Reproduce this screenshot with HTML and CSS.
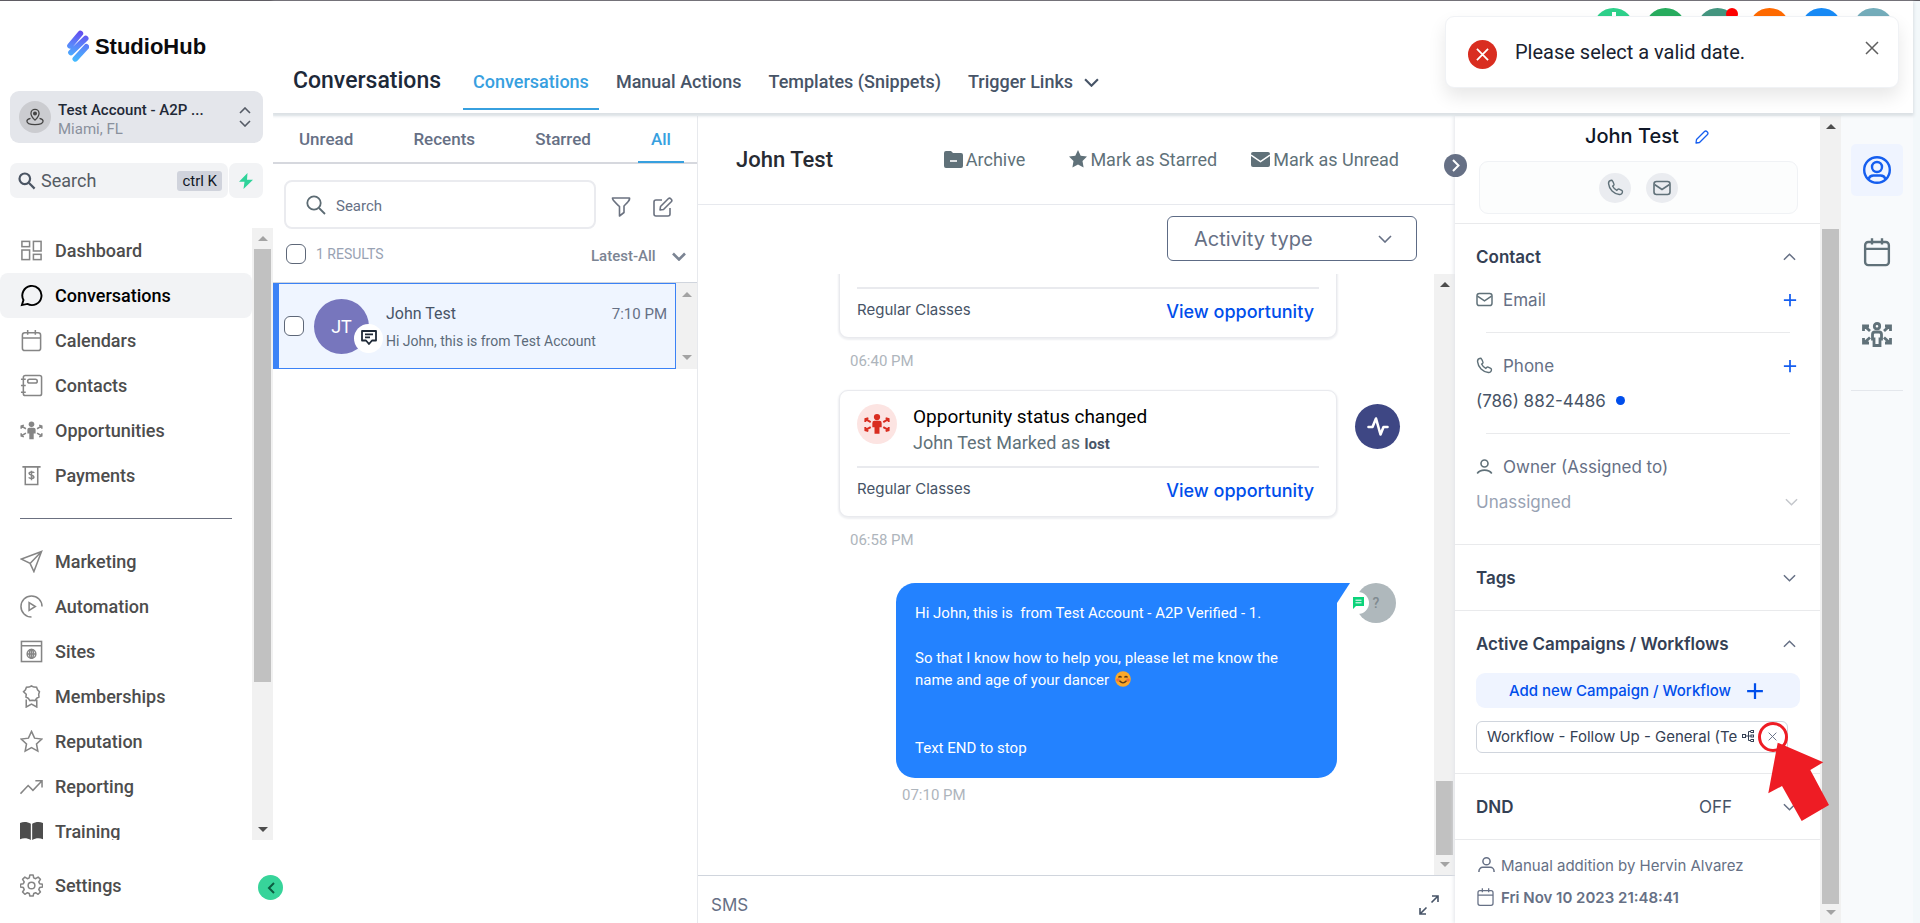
FILE: index.html
```html
<!DOCTYPE html>
<html lang="en">
<head>
<meta charset="utf-8">
<meta name="viewport" content="width=device-width, initial-scale=1">
<title>StudioHub – Conversations</title>
<link rel="stylesheet" href="styles.css">
</head>
<body>
<svg class="defs" aria-hidden="true">
  <defs>
    <linearGradient id="brand" gradientUnits="userSpaceOnUse" x1="245" y1="90" x2="225" y2="185">
      <stop offset="0" stop-color="#6446ee"/><stop offset=".5" stop-color="#5a86fa"/><stop offset="1" stop-color="#41bdff"/>
    </linearGradient>
    <symbol id="i-down" viewBox="0 0 14 8"><path d="M1 1l6 6 6-6"/></symbol>
    <symbol id="i-up" viewBox="0 0 14 8"><path d="M1 7l6-6 6 6"/></symbol>
    <symbol id="i-plus" viewBox="0 0 16 16"><path d="M8 1v14M1 8h14"/></symbol>
    <symbol id="i-x" viewBox="0 0 14 14"><path d="M1 1l12 12M13 1L1 13"/></symbol>
    <symbol id="i-cal" viewBox="0 0 24 24"><rect x="2.5" y="4" width="19" height="18.5" rx="2.5"/><path d="M2.500 9.500h19M8 1v5M16 1v5"/></symbol>
    <symbol id="i-mail" viewBox="0 0 18 16"><rect x="1" y="1.500" width="16" height="13" rx="2.500"/><path d="M1.500 4.500L9 9.500l7.500-5"/></symbol>
    <symbol id="i-phone" viewBox="0 0 24 24"><path d="M6.200 1.800C4 2 2 4 2.200 6.500 3 14.500 9.500 21 17.500 21.800c2.500.2 4.500-1.800 4.300-4 0-.8-.4-1.400-1-1.700l-3.600-1.800c-.8-.4-1.600-.2-2.200.4l-1.200 1.300c-2.600-1.300-4.500-3.200-5.800-5.800L9.300 9c.6-.6.8-1.400.4-2.200L7.900 2.900c-.3-.7-1-1.100-1.700-1.100z"/></symbol>
    <symbol id="i-user" viewBox="0 0 18 18"><circle cx="9" cy="5" r="3.800"/><path d="M1 16.500v-1a4 4 0 0 1 4-4h8a4 4 0 0 1 4 4v1"/></symbol>
    <symbol id="i-people" viewBox="0 0 24 20"><g fill="currentColor" stroke="none"><circle cx="12" cy="3.600" r="2.900"/><path d="M9.700 7h4.600a2 2 0 0 1 2 2v4h-2v6h-4.600v-6h-2V9a2 2 0 0 1 2-2z"/></g><path d="M6.200 8.200L1.500 5.500M1.200 8.200L1.300 5.300 4 4.600M6.200 12.800L1.500 15.500M1.200 12.800l.1 2.900 2.700.7M17.800 8.200l4.700-2.700M22.800 8.200l-.1-2.900L20 4.600M17.800 12.800l4.700 2.700M22.800 12.800l-.1 2.900-2.700.7"/></symbol>
  </defs>
</svg>

<div class="app">
  <aside class="sidebar">
    <div class="logo">
      <svg width="22" height="32" viewBox="202 90 66 95"><g stroke="url(#brand)" stroke-width="17" stroke-linecap="round"><path d="M211 137l31-37M214 157l44-42M227 176l33-36"/></g></svg>
      <span>StudioHub</span>
    </div>
    <button class="account">
      <span class="account-pin"><svg width="18" height="18" viewBox="0 0 20 20" stroke-width="1.400"><circle cx="10" cy="6" r="1.500" fill="currentColor"/><path d="M10 13.500C7 10.500 5.500 8.500 5.500 6a4.500 4.500 0 0 1 9 0c0 2.500-1.500 4.500-4.500 7.500z"/><path d="M5 11.500c-2.500.6-4 1.600-4 3C1 17 5 18.500 10 18.500s9-1.500 9-4c0-1.400-1.500-2.400-4-3"/></svg></span>
      <span class="account-text"><span class="account-name">Test Account - A2P ...</span><span class="account-city">Miami, FL</span></span>
      <svg class="updown" width="12" height="20" viewBox="0 0 12 20"><path d="M1 6l5-5 5 5M1 14l5 5 5-5"/></svg>
    </button>
    <div class="quick">
      <label class="quick-search">
        <svg width="18" height="18" viewBox="0 0 18 18" stroke-width="2.200"><circle cx="6.800" cy="6.800" r="5.300"/><path d="M10.800 10.800l5.800 5.800"/></svg>
        <input type="text" placeholder="Search" aria-label="Search">
        <kbd>ctrl K</kbd>
      </label>
      <button class="quick-bolt" aria-label="Quick actions"><svg width="14" height="16" viewBox="0 0 14 16"><path d="M8.500 0L0 8.700h5.500L4.500 16 14 6.800H8z" fill="#2fd39a" stroke="none"/></svg></button>
    </div>

    <div class="nav-wrap">
      <nav class="nav">
        <a href="#"><svg viewBox="0 0 24 24"><rect x="2" y="2.500" width="8" height="5.500"/><rect x="14" y="2.500" width="8" height="10"/><rect x="2" y="11.500" width="8" height="10"/><rect x="14" y="16" width="8" height="5.500"/></svg>Dashboard</a>
        <a href="#" class="active"><svg viewBox="0 0 24 24" stroke-width="2"><path d="M2 22l1.600-5.300A10 10 0 1 1 7.700 20.800z"/></svg>Conversations</a>
        <a href="#"><svg><use href="#i-cal"/></svg>Calendars</a>
        <a href="#"><svg viewBox="0 0 24 24"><rect x="3.500" y="1.500" width="19" height="21" rx="2"/><rect x="8" y="5.500" width="10" height="4" rx="2"/><path d="M1 5.500h5M1 12h5M1 19h5"/></svg>Contacts</a>
        <a href="#"><svg viewBox="0 0 24 20"><use href="#i-people"/></svg>Opportunities</a>
        <a href="#"><svg viewBox="0 0 24 24"><path d="M2.500 3h19M5.500 3v18.500h13V3"/><path d="M14.500 9.500c0-1.500-5-1.500-5 .5s5 1.500 5 3.500-5 2-5 .3M12 7v10"/></svg>Payments</a>
        <hr>
        <a href="#"><svg viewBox="0 0 24 24"><path d="M22.500 1.500L1.500 9.500l9 4.500 4 8.500zM22.500 1.500L10.500 14"/></svg>Marketing</a>
        <a href="#"><svg viewBox="0 0 24 24"><path d="M23 12A11 11 0 1 0 12 23M9.500 8v8l6.500-4z"/></svg>Automation</a>
        <a href="#"><svg viewBox="0 0 24 24"><rect x="1.500" y="1.500" width="21" height="21"/><path d="M1.500 6h21M7.500 14.500h9M12 10v9"/><circle cx="12" cy="14.500" r="4.500"/><ellipse cx="12" cy="14.500" rx="2" ry="4.500"/></svg>Sites</a>
        <a href="#"><svg viewBox="0 0 24 24"><path d="M12 1l2.500 1.200 2.800.2 1 2.600 2 2-.8 2.700.3 2.800-2.500 1.500-1.600 2.300-2.700-.3-2.700.3-1.600-2.300-2.500-1.500.3-2.800L3.700 7l2-2 1-2.600 2.800-.2z"/><path d="M6.500 15v8l5.500-3 5.500 3v-8"/></svg>Memberships</a>
        <a href="#"><svg viewBox="0 0 24 24"><path d="M12 1.500l3.200 7 7.500.9-5.500 5.200 1.400 7.400-6.600-3.600L5.400 22l1.400-7.400L1.300 9.400l7.500-.9z"/></svg>Reputation</a>
        <a href="#"><svg viewBox="0 0 24 24"><path d="M.5 19.500L8.500 11l5 5L23 6M16 6h7v7"/></svg>Reporting</a>
        <a href="#"><svg viewBox="0 0 24 24" class="solid"><path d="M0 3c4-1.500 8-1 11.300.8v17C8 19 4 18.500 0 20zM24 3c-4-1.500-8-1-11.300.8v17C16 19 20 18.500 24 20z"/></svg>Training</a>
      </nav>
      <div class="bar nav-bar"><i class="up dim"></i><b></b><i class="dn"></i></div>
    </div>
    <div class="settings nav">
      <a href="#"><svg viewBox="0 0 24 24"><circle cx="12" cy="12" r="3.500"/><path d="M10.300 1h3.400l.6 3 2 .9 2.600-1.700 2.400 2.400-1.700 2.600.9 2 3 .6v2.800l-3 .6-.9 2 1.700 2.600-2.400 2.400-2.600-1.700-2 .9-.6 2.600h-3.400l-.6-2.600-2-.9-2.600 1.700-2.400-2.400 1.700-2.600-.9-2-3-.6v-2.800l3-.6.9-2-1.700-2.600 2.400-2.400 2.600 1.700 2-.9z" stroke-linejoin="round"/></svg>Settings</a>
      <button class="collapse" aria-label="Collapse sidebar"><svg width="8" height="12" viewBox="0 0 8 12" stroke-width="2"><path d="M7 1L2 6l5 5"/></svg></button>
    </div>
  </aside>

  <div class="main">
    <header class="top">
      <h1>Conversations</h1>
      <nav class="tabs">
        <a href="#" class="on">Conversations</a>
        <a href="#">Manual Actions</a>
        <a href="#">Templates (Snippets)</a>
        <a href="#">Trigger Links <svg width="15" height="9" stroke-width="2"><use href="#i-down"/></svg></a>
      </nav>
      <div class="dots">
        <span class="d1"><svg width="4" height="12" viewBox="0 0 4 12"><path d="M2 0v12" stroke="#fff" stroke-width="4"/></svg></span><span class="d2"></span><span class="d3"><em></em></span><span class="d4"></span><span class="d5"></span><span class="d6"></span>
      </div>
    </header>

    <div class="body">
      <section class="list">
        <nav class="list-tabs"><a href="#">Unread</a><a href="#">Recents</a><a href="#">Starred</a><a href="#" class="on">All</a></nav>
        <div class="list-search">
          <label><svg width="20" height="20" viewBox="0 0 20 20" stroke-width="1.800"><circle cx="8" cy="8" r="6.700"/><path d="M13 13l6 6"/></svg><input type="text" placeholder="Search" aria-label="Search conversations"></label>
          <button aria-label="Filter"><svg width="20" height="20" viewBox="0 0 20 20" stroke-linejoin="round"><path d="M1.500 1h17c.5 2-1 3.600-5.500 8v6.500L8.500 19V9.500C4 5 1 3 1.500 1z"/></svg></button>
          <button aria-label="New conversation"><svg width="20" height="20" viewBox="0 0 20 20" stroke-linejoin="round"><path d="M9 3H3a2 2 0 0 0-2 2v12a2 2 0 0 0 2 2h12a2 2 0 0 0 2-2v-6M7 13l.5-3.500L15.500 1.500c1.500-1.200 4.200 1.500 3 3L10.500 12.500z"/></svg></button>
        </div>
        <div class="list-meta">
          <label><input type="checkbox"><span>1 RESULTS</span></label>
          <span class="sort"><select aria-label="Sort"><option>Latest-All</option></select><svg width="14" height="9" stroke-width="2.600"><use href="#i-down"/></svg></span>
        </div>
        <div class="rows">
          <article class="row">
            <input type="checkbox" aria-label="Select John Test">
            <div class="avatar">JT<span><svg width="16" height="16" viewBox="0 0 16 16" stroke-width="1.800" stroke-linejoin="round"><path d="M1 1h14v9.500h-4L8 14l-3-3.500H1zM4 4.300h8M4 7.300h5"/></svg></span></div>
            <div class="row-text"><div><span class="who">John Test</span><time>7:10 PM</time></div><p>Hi John, this is from Test Account</p></div>
          </article>
          <div class="bar row-bar"><i class="up dim"></i><i class="dn dim"></i></div>
        </div>
      </section>

      <section class="thread">
        <header>
          <h2>John Test</h2>
          <div class="acts">
            <button><svg width="19" height="17" viewBox="0 0 19 17"><path d="M2 0h5l2 2h8a2 2 0 0 1 2 2v11a2 2 0 0 1-2 2H2a2 2 0 0 1-2-2V2a2 2 0 0 1 2-2z" fill="#607179" stroke="none"/><path d="M6 10h7" stroke="#fff"/></svg>Archive</button>
            <button class="star"><svg width="18" height="18" viewBox="0 0 18 18"><path d="M9 0l2.700 5.700 6.300.9-4.500 4.300 1.100 6.600L9 14.600l-5.600 2.900 1.100-6.600L0 6.600l6.300-.9z" fill="#607179" stroke="none"/></svg>Mark as Starred</button>
            <button><svg width="19" height="15" viewBox="0 0 19 15"><rect width="19" height="15" rx="2" fill="#607179" stroke="none"/><path d="M0 3l9.500 6.500L19 3" stroke="#fff" stroke-width="1.500"/></svg>Mark as Unread</button>
          </div>
          <button class="next" aria-label="Hide details"><svg width="8" height="13" viewBox="0 0 8 13" stroke-width="2"><path d="M1 1l5.500 5.500L1 12"/></svg></button>
        </header>
        <div class="filter"><span><select aria-label="Activity type"><option>Activity type</option></select><svg width="14" height="8"><use href="#i-down"/></svg></span></div>
        <div class="feed-wrap">
          <div class="feed">
            <div class="event">
              <div class="card">
                <div class="card-top"></div>
                <div class="card-end"><span>Regular Classes</span><a href="#">View opportunity</a></div>
              </div>
              <time>06:40 PM</time>
            </div>
            <div class="event">
              <div class="card">
                <div class="card-top"><span class="card-ic"><svg width="26" height="22" stroke-width="1.800"><use href="#i-people"/></svg></span><div><h3>Opportunity status changed</h3><p>John Test Marked as <b>lost</b></p></div></div>
                <div class="card-end"><span>Regular Classes</span><a href="#">View opportunity</a></div>
              </div>
              <span class="pulse"><svg width="22" height="22" viewBox="0 0 22 22" stroke-width="2.600" stroke-linejoin="round" stroke-linecap="round"><path d="M1.500 11h4L9 2.500l4.500 16 3-7.500h4"/></svg></span>
              <time>06:58 PM</time>
            </div>
            <div class="event msg">
              <div class="bubble"><p>Hi John, this is&nbsp; from Test Account - A2P Verified - 1.</p><p>So that I know how to help you, please let me know the name and age of your dancer <svg role="img" aria-label="smiling face" width="16" height="16" viewBox="0 0 16 16"><circle cx="8" cy="8" r="7.800" fill="#fca929" stroke="none"/><circle cx="3" cy="9" r="1.800" fill="#f4703a" stroke="none"/><circle cx="13" cy="9" r="1.800" fill="#f4703a" stroke="none"/><path d="M3.500 6.500q1.500-2 3 0M9.500 6.500q1.500-2 3 0M4.500 9.800q3.500 4 7 0" stroke="#5b3a16" stroke-width="1.300"/></svg></p><p class="last">Text END to stop</p></div>
              <span class="sender">?<span><svg width="11" height="12" viewBox="0 0 11 12"><path d="M0 0h11v9H3l-3 3z" fill="#0bd37a" stroke="none"/><path d="M2.500 3.200h6M2.500 5.800h6" stroke="#fff" stroke-width="1"/></svg></span></span>
              <time>07:10 PM</time>
            </div>
          </div>
          <div class="bar feed-bar"><i class="up"></i><b></b><i class="dn dim"></i></div>
        </div>
        <footer><span>SMS</span><button aria-label="Expand"><svg width="20" height="20" viewBox="0 0 20 20"><path d="M12.500 7.500L19 1M13 1h6v6M7.500 12.500L1 19M1 13v6h6"/></svg></button></footer>
      </section>

      <aside class="details">
        <div class="details-main">
          <div class="person">
            <h2>John Test <svg width="14" height="14" viewBox="0 0 14 14" stroke="#155eef" stroke-width="1.300" stroke-linejoin="round"><path d="M1 13l.5-3.500 8-8c1.500-1.500 4.500 1 3 3l-8 8z"/></svg></h2>
            <div class="contact-ways"><button aria-label="Call"><svg width="17" height="17" stroke-width="2"><use href="#i-phone"/></svg></button><button aria-label="Email"><svg width="18" height="16"><use href="#i-mail"/></svg></button></div>
          </div>
          <section class="contact">
            <h3>Contact <svg width="13" height="8"><use href="#i-up"/></svg></h3>
            <div class="field"><div class="line"><svg width="17" height="15"><use href="#i-mail"/></svg><span>Email</span><svg class="add" width="14" height="14" stroke-width="2"><use href="#i-plus"/></svg></div></div>
            <div class="field"><div class="line"><svg width="17" height="17" stroke-width="2"><use href="#i-phone"/></svg><span>Phone</span><svg class="add" width="14" height="14" stroke-width="2"><use href="#i-plus"/></svg></div><div class="value">(786) 882-4486 <i></i></div></div>
            <div class="field"><div class="line"><svg width="17" height="15" viewBox="0 0 17 15"><circle cx="8.500" cy="4.500" r="3.500"/><path d="M1.200 14.500c3-4.500 11.600-4.500 14.600 0"/></svg><label for="owner">Owner (Assigned to)</label></div><div class="value muted"><select id="owner"><option>Unassigned</option></select><svg width="13" height="8"><use href="#i-down"/></svg></div></div>
          </section>
          <section><h3>Tags <svg width="13" height="8"><use href="#i-down"/></svg></h3></section>
          <section class="flows">
            <h3>Active Campaigns / Workflows <svg width="13" height="8"><use href="#i-up"/></svg></h3>
            <button class="add-flow">Add new Campaign / Workflow <svg width="18" height="18" stroke-width="2"><use href="#i-plus"/></svg></button>
            <div class="flow"><span>Workflow - Follow Up - General (Te</span><svg width="12" height="12" viewBox="0 0 12 12" stroke-width="1"><path d="M3.500 6H9M9 1.500H6.500v9H9"/><rect x=".5" y="4.500" width="3" height="3"/><rect x="9" y=".5" width="2.500" height="2"/><rect x="9" y="5" width="2.500" height="2"/><rect x="9" y="9.500" width="2.500" height="2"/></svg>
              <button aria-label="Remove workflow"><svg width="9" height="9" stroke-width="1.500"><use href="#i-x"/></svg></button></div>
            <svg class="marker" width="78" height="102" viewBox="0 0 78 102"><circle cx="18" cy="17" r="13.500" fill="none" stroke="#ee1c24" stroke-width="3"/><path d="M22.700 22.700L68.300 42.300 55.300 50 74 85 46.700 101 27 66 13.300 73.300z" fill="#ee1c24" stroke="none"/></svg>
          </section>
          <section><h3>DND <span class="off">OFF</span><svg width="13" height="8"><use href="#i-down"/></svg></h3></section>
          <div class="origin">
            <p><svg width="17" height="18"><use href="#i-user"/></svg>Manual addition by Hervin Alvarez</p>
            <p class="strong"><svg width="19" height="20"><use href="#i-cal"/></svg>Fri Nov 10 2023 21:48:41</p>
          </div>
        </div>
        <div class="bar det-bar"><i class="up"></i><b></b><i class="dn dim"></i></div>
      </aside>

      <nav class="rail">
        <button class="on" aria-label="Contact"><svg width="28" height="28" viewBox="0 0 28 28" stroke-width="2.400"><circle cx="14" cy="14" r="12.800"/><circle cx="14" cy="11" r="5"/><path d="M5.500 23c1-3 3-3.500 5-3.500h7c2 0 4 .5 5 3.500"/></svg></button>
        <button aria-label="Appointments"><svg width="30" height="30" stroke-width="1.900"><use href="#i-cal"/></svg></button>
        <button aria-label="Opportunities"><svg width="30" height="26" viewBox="0 -1 30 26" stroke-width="2.800"><circle cx="15" cy="4.200" r="2.700"/><path d="M13 10h4a2.500 2.500 0 0 1 2.500 2.500V17H18v6.500h-6V17h-1.500v-4.500A2.500 2.500 0 0 1 13 10z"/><path d="M8 9L2 3.500M1.500 9V4H7M8 15.500L2 21M1.500 16v5H7M22 9l6-5.500M28.500 9V4H23M22 15.500l6 5.500M28.500 16v5H23"/></svg></button>
        <hr>
      </nav>
    </div>
  </div>

  <div class="toast" role="alert">
    <span class="toast-ic"><svg width="13" height="13" stroke-width="1.900"><use href="#i-x"/></svg></span>
    <p>Please select a valid date.</p>
    <button aria-label="Close"><svg width="14" height="14" stroke-width="1.500"><use href="#i-x"/></svg></button>
  </div>
</div>
</body>
</html>
```

FILE: styles.css
```css
* { box-sizing: border-box; margin: 0; padding: 0; }
html, body { height: 100%; }
body { font-family: Roboto, "Open Sans", sans-serif; font-size: 16px; color: #1f2937; overflow: hidden; background: #f3f8fa; fill: none; stroke: currentColor; stroke-width: 1.6; }
a { color: inherit; text-decoration: none; }
button, input, select { font: inherit; color: inherit; background: none; border: 0; outline: 0; }
select { appearance: none; }
svg { flex: none; }
.defs { position: absolute; width: 0; height: 0; }
.app { position: relative; display: flex; height: 100%; border-top: 1px solid #5f5c63; }

/* scrollbars */
.bar { width: 21px; flex: none; background: #f1f1f1; display: flex; flex-direction: column; align-items: center; padding: 8px 2px; }
.bar i { border: 5px solid transparent; flex: none; }
.bar .up { border-top: 0; border-bottom-color: #4d4d4d; }
.bar .dn { border-bottom: 0; border-top-color: #4d4d4d; margin-top: auto; }
.bar .up.dim { border-bottom-color: #a3a3a3; }
.bar .dn.dim { border-top-color: #a3a3a3; }
.bar b { width: 17px; background: #c1c1c1; }

/* sidebar */
.sidebar { width: 273px; flex: none; background: #fff; display: flex; flex-direction: column; position: relative; z-index: 3; }
.logo { height: 90px; display: flex; align-items: center; justify-content: center; gap: 6px; font: bold 22px "Liberation Sans", sans-serif; color: #0b0b0d; }
.logo span { padding-top: 1px; }
.account { margin: 0 10px; height: 52px; border-radius: 9px; background: #e4e6eb; display: flex; align-items: center; padding: 0 12px 0 9px; text-align: left; }
.account-pin { width: 32px; height: 32px; border-radius: 50%; background: #cbccd0; display: grid; place-items: center; color: #444; }
.account-text { flex: 1; margin-left: 7px; padding-top: 5px; display: flex; flex-direction: column; font-size: 15px; line-height: 19px; }
.account-name { color: #1f2937; font-weight: 500; }
.account-city { color: #8a919d; }
.updown { color: #555b66; }
.quick { margin: 20px 10px 30px; display: flex; gap: 1px; height: 35px; }
.quick-search, .quick-bolt { background: #f2f3f5; border-radius: 7px; display: flex; align-items: center; }
.quick-search { flex: 1; min-width: 0; padding: 0 6px 0 8px; color: #4b5563; }
.quick-search input { flex: 1; min-width: 0; padding-left: 5px; font-size: 18px; }
.quick-search input::placeholder { color: #555b63; opacity: 1; }
kbd { font: 15px Roboto, sans-serif; color: #111827; background: #d0d3dc; border-radius: 3px; padding: 0 5px; line-height: 20px; white-space: nowrap; }
.quick-bolt { width: 34px; flex: none; justify-content: center; }
.nav-wrap { flex: 1; min-height: 0; display: flex; overflow: hidden; }
.nav-wrap .nav { flex: 1; overflow: hidden; }
.nav a { display: flex; align-items: center; gap: 12px; height: 45px; padding-left: 20px; font-size: 18px; color: #4d4d4d; border-radius: 8px; }
.nav a svg { width: 23px; height: 23px; color: #858585; }
.nav a .solid { fill: #4d4d4d; stroke: none; }
.nav a.active { background: #f2f3f5; color: #000; }
.nav a.active svg { color: #000; }
.nav hr { border: 0; height: 1px; background: #6b7080; margin: 20px 20px; }
.nav-bar b { height: 433px; margin-top: 8px; }
.settings { position: relative; padding: 23px 0 15px; }
.collapse { position: absolute; right: -10px; top: 35px; width: 25px; height: 25px; border-radius: 50%; background: #37d49a; display: grid; place-items: center; color: #0b5c40; }
.nav a, .tabs a, .list-tabs a { font-weight: 500; }

/* top bar */
.main { flex: 1; min-width: 0; display: flex; flex-direction: column; position: relative; }
.top { position: relative; z-index: 2; display: flex; align-items: flex-end; height: 112px; margin-right: 7px; padding: 0 19px 3px 20px; background: #fff; box-shadow: 0 2px 3px 1px #dbe0e4; flex: none; }
.top h1 { font-size: 23px; font-weight: 500; line-height: 30px; padding-bottom: 14px; color: #1d2939; }
.tabs { display: flex; margin-left: 22px; gap: 7px; color: #475467; }
.tabs a { font-size: 18px; line-height: 26px; padding: 0 10px 13px; border-bottom: 2px solid transparent; display: flex; align-items: center; gap: 11px; }
.tabs .on { color: #37a0df; border-color: #37a0df; }
.dots { display: flex; gap: 11px; margin-left: auto; align-self: flex-start; padding-top: 7px; }
.dots span { width: 41px; height: 41px; border-radius: 50%; position: relative; text-align: center; }
.dots svg { margin-top: 4px; }
.d1 { background: #2ed18b; } .d2 { background: #28ad5f; } .d3 { background: #449680; } .d4 { background: #ff6a00; } .d5 { background: #188bf6; } .d6 { background: #74adbb; }
.dots em { position: absolute; right: 0; top: 0; width: 12px; height: 12px; border-radius: 50%; background: #f00; }
.body { flex: 1; min-height: 0; display: flex; padding-top: 3px; padding-right: 7px; }

/* conversation list */
.list { width: 425px; flex: none; background: #fff; border-right: 1px solid #e7e9ed; }
.list-tabs { display: flex; justify-content: space-between; padding: 0 13px; border-bottom: 2px solid #d6d8de; color: #667085; font-size: 17px; }
.list-tabs a { padding: 11px 13px 10px; line-height: 24px; border-bottom: 2px solid transparent; margin-bottom: -1px; }
.list-tabs .on { color: #37a0df; border-color: #37a0df; }
.list-search { display: flex; align-items: center; padding: 16px 24px 0 11px; color: #6b7280; }
.list-search label { flex: 1; display: flex; align-items: center; height: 49px; border: 2px solid #eaebef; border-radius: 8px; padding-left: 20px; gap: 10px; color: #5c6b73; margin-right: 15px; }
.list-search input { flex: 1; min-width: 0; font-size: 15px; padding-top: 2px; }
.list-search input::placeholder { color: #667085; opacity: 1; }
.list-search button { width: 20px; height: 20px; margin-top: 5px; }
.list-search button + button { margin-left: 22px; }
input[type=checkbox] { appearance: none; width: 20px; height: 20px; border: 1px solid #5d6778; border-radius: 6px; background: #fff; flex: none; }
.list-meta { display: flex; justify-content: space-between; align-items: center; padding: 15px 11px 18px 13px; border-bottom: 1px solid #d0d5dd; height: 54px; }
.list-meta label { display: flex; align-items: center; gap: 10px; color: #98a2b3; font-size: 14px; }
.sort { display: flex; align-items: center; gap: 16px; padding-top: 4px; color: #7b8493; font-size: 15px; font-weight: 500; }
.rows { display: flex; height: 86px; }
.row { flex: 1; display: flex; align-items: center; background: #eff5ff; border: 1px solid #3b82f6; border-left-width: 6px; padding: 0 8px 0 5px; }
.row-bar { padding: 9px 0; }
.avatar { position: relative; width: 55px; height: 55px; margin-left: 10px; border-radius: 50%; background: #7776bd; color: #fff; display: grid; place-items: center; font-size: 18px; }
.avatar span { position: absolute; right: -14px; bottom: 1px; width: 29px; height: 29px; border-radius: 50%; background: #fff; display: grid; place-items: center; color: #1f2937; }
.row-text { flex: 1; margin-left: 17px; padding-top: 2px; }
.row-text div { display: flex; justify-content: space-between; font-size: 16px; line-height: 26px; color: #475467; }
.row-text time { font-size: 15px; color: #667085; }
.row-text p { font-size: 14px; line-height: 24px; margin-top: 2px; color: #5c6b7a; }

/* thread */
.thread { flex: 1; min-width: 0; background: #fff; display: flex; flex-direction: column; }
.thread > header { position: relative; display: flex; align-items: center; justify-content: space-between; height: 89px; padding: 0 56px 2px 38px; border-bottom: 1px solid #e7e9ee; flex: none; }
.thread h2 { font-size: 22px; font-weight: 500; color: #272b33; }
.acts { display: flex; color: #607179; font-size: 18px; gap: 34px; }
.acts button { display: flex; align-items: center; gap: 3px; }
.acts .star { margin-left: 10px; }
.next { position: absolute; z-index: 2; right: -12px; top: 38px; width: 23px; height: 23px; border-radius: 50%; background: #667085; color: #fff; display: grid; place-items: center; }
.filter { padding: 11px 38px 13px 0; display: flex; justify-content: flex-end; flex: none; }
.filter span { position: relative; width: 250px; height: 45px; border: 1px solid #5d6b85; border-radius: 6px; display: flex; align-items: center; color: #667085; }
.filter select { width: 100%; height: 100%; padding-left: 26px; font: 20px Inter, sans-serif; }
.filter svg { position: absolute; right: 24px; top: 18px; }
.feed-wrap { flex: 1; min-height: 0; display: flex; overflow: hidden; }
.feed { flex: 1; display: flex; flex-direction: column; justify-content: flex-end; padding: 0 97px 68px 141px; overflow: hidden; }
.event { position: relative; flex: none; margin-bottom: 17px; }
.event time { display: block; margin: 11px 0 0 11px; font-size: 15px; line-height: 24px; color: #aeb5bc; }
.card { border: 1px solid #e9eaee; border-radius: 9px; box-shadow: 0 1px 2px 1px #eeeff2; height: 127px; padding: 13px 17px 0 17px; background: #fff; font-family: Inter, sans-serif; }
.card-top { display: flex; gap: 16px; height: 64px; border-bottom: 2px solid #e9eaee; }
.card-ic { width: 40px; height: 40px; border-radius: 50%; background: #fce4e2; color: #d92d20; display: grid; place-items: center; }
.card h3 { font: 19px/26px Roboto, sans-serif; color: #000; }
.card p { font: 18px/26px Roboto, sans-serif; color: #607179; }
.card p b { font-size: 15px; color: #475467; }
.card-end { display: flex; justify-content: space-between; align-items: center; padding: 6px 5px 0 0; font-size: 15px; line-height: 26px; color: #475467; }
.card-end a { font-size: 18px; font-weight: 500; color: #004eeb; padding-top: 4px; }
.pulse { position: absolute; right: -63px; top: 14px; width: 45px; height: 45px; border-radius: 50%; background: #3e4784; color: #fff; display: grid; place-items: center; }
.msg { margin: 14px 0 0 57px; }
.bubble { position: relative; background: #2382ff; color: #fff; border-radius: 19px 0 19px 19px; padding: 19px 50px 19px 19px; font-size: 15px; line-height: 22px; }
.bubble::after { content: ""; position: absolute; left: 100%; top: 0; border-top: 20px solid #2382ff; border-right: 13px solid transparent; }
.bubble p + p { margin-top: 23px; }
.bubble p.last { margin-top: 46px; }
.bubble svg { vertical-align: -2px; margin-left: 2px; }
.msg time { margin: 5px 0 0 6px; }
.sender { position: absolute; right: -59px; top: 0; width: 40px; height: 40px; border-radius: 50%; background: #afb8bc; color: #7f8a8f; display: grid; place-items: center; font-size: 14px; font-weight: 500; }
.sender span { position: absolute; left: -9px; top: 9px; width: 22px; height: 22px; border-radius: 50%; background: #fff; display: grid; place-items: center; }
.thread footer { display: flex; justify-content: space-between; align-items: center; height: 48px; border-top: 1px solid #d0d5dd; padding: 11px 16px 0 13px; font: 17px Inter, sans-serif; color: #667085; flex: none; }
.thread footer svg { display: block; color: #475467; }
.feed-bar b { height: 74px; margin-top: auto; }
.feed-bar .dn { margin-top: 7px; }

/* details */
.details { width: 386px; flex: none; display: flex; background: #fff; box-shadow: 0 0 4px 1px #e2e5e9; font-family: Inter, sans-serif; }
.details-main { flex: 1; min-width: 0; }
.person { height: 108px; border-bottom: 1px solid #e9eaec; padding: 8px 22px 0 24px; text-align: center; }
.person h2 { font-size: 20px; line-height: 24px; font-weight: 500; color: #101828; padding-left: 17px; }
.person h2 svg { margin-left: 11px; vertical-align: -1px; }
.contact-ways { height: 53px; margin-top: 13px; border: 1px solid #f0f2f5; border-radius: 9px; background: #fcfdfd; display: flex; align-items: center; justify-content: center; gap: 15px; }
.contact-ways button { width: 32px; height: 30px; border-radius: 50%; background: #eaecf0; display: grid; place-items: center; color: #607179; }
.details section { position: relative; border-bottom: 1px solid #e9eaec; padding: 0 20px 0 21px; }
.details h3 { height: 65px; display: flex; align-items: center; justify-content: space-between; font-size: 17px; font-weight: 600; color: #344054; padding-right: 4px; }
.details h3 svg { color: #667085; }
.off { margin-left: auto; margin-right: 51px; font-weight: 400; color: #475467; }
.details .contact { padding-bottom: 25px; }
.contact h3 { margin-bottom: -8px; }
.field { font-size: 17px; color: #667085; }
.line { display: flex; align-items: center; gap: 10px; height: 36px; padding: 1px 3px 0 0; }
.line svg { color: #607179; }
.line .add { margin-left: auto; color: #155eef; }
.field + .field { border-top: 1px solid #e9eaec; margin: 15px 10px 0; }
.field + .field .line { margin: 14px -10px 0; }
.field + .field .value { margin: 0 -10px; }
.value { height: 35px; display: flex; align-items: center; color: #475467; gap: 10px; }
.value i { width: 9px; height: 9px; border-radius: 50%; background: #004eeb; }
.muted { color: #98a2b3; }
.muted select { flex: 1; }
.muted svg { color: #c4c7cc; margin-right: 2px; }
.details .flows { padding-bottom: 20px; }
.flows h3 { height: 62px; padding-top: 3px; }
.add-flow { width: 100%; height: 35px; border-radius: 9px; background: #eff4ff; color: #004eeb; font-size: 15px; font-weight: 500; display: flex; align-items: center; justify-content: center; gap: 15px; padding-right: 3px; }
.flow { display: flex; align-items: center; height: 32px; margin: 13px 12px 0 0; border: 1px solid #d0d5dd; border-radius: 6px; padding: 0 0 2px 10px; font-size: 15px; color: #344054; }
.flow > svg { margin-left: auto; }
.flow button { margin: 0 10px 0 14px; display: grid; place-items: center; width: 9px; color: #667085; }
.marker { position: absolute; z-index: 3; right: -13px; bottom: -49px; }
.origin { padding: 9px 20px 0; color: #667085; font-size: 15px; }
.origin p { display: flex; align-items: center; gap: 6px; height: 32px; padding-left: 3px; }
.origin p.strong { font-weight: 600; padding-left: 1px; }
.det-bar b { height: 675px; margin-top: 100px; }
.rail { width: 72px; flex: none; background: #f8fafc; padding: 28px 9px; display: flex; flex-direction: column; align-items: center; gap: 30px; }
.rail button { width: 52px; height: 52px; border-radius: 5px; display: grid; place-items: center; color: #607179; }
.rail .on { background: #eff4ff; color: #155eef; }
.rail hr { width: 52px; border: 0; border-top: 1px solid #e4e7ec; }

/* toast */
.toast { position: absolute; z-index: 5; top: 15px; right: 21px; width: 454px; height: 72px; background: #fff; border: 1px solid #f0f2f5; border-radius: 9px; box-shadow: 0 9px 18px #00000018; display: flex; align-items: center; padding: 0 19px 0 22px; }
.toast-ic { width: 29px; height: 29px; border-radius: 50%; background: #d92d20; color: #fff; display: grid; place-items: center; margin-top: 4px; }
.toast p { flex: 1; margin-left: 18px; font-size: 20px; color: #182230; }
.toast button { color: #5f5f5f; margin-bottom: 5px; }
```
